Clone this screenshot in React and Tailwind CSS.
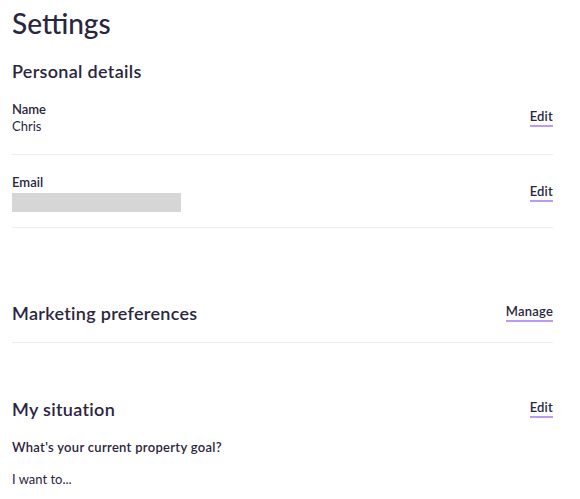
const ink = "text-[#2b2640]";

function LinkButton({ children }) {
    return (
        <button
            type="button"
            className={`${ink} text-[13px] font-semibold leading-[14px] tracking-[0.2px] border-b-2 border-[#b99af5] pb-[2px]`}
        >
            {children}
        </button>
    );
}

function DetailRow({ label, className, children }) {
    return (
        <div className={`flex items-center justify-between border-b border-[#ececec] ${className}`}>
            <div className="flex flex-col">
                <span className={`${ink} text-[13px] font-semibold leading-[16px]`}>{label}</span>
                {children}
            </div>
            <LinkButton>Edit</LinkButton>
        </div>
    );
}

const sectionTitle = `${ink} text-[18px] font-semibold leading-[24px] tracking-[0.3px]`;

export default function App() {
    return (
        <div className="w-[580px] bg-white font-['Lato',sans-serif] px-3 pt-[6px]">
            <div className="w-[541px]">
                <h1 className={`${ink} text-[28px] font-medium leading-[34px]`}>Settings</h1>
                <h2 className={`${sectionTitle} mt-[19px]`}>Personal details</h2>

                <DetailRow label="Name" className="pt-[18px] pb-[19px]">
                    <span className={`${ink} text-[13px] leading-[18px]`}>Chris</span>
                </DetailRow>
                <DetailRow label="Email" className="pt-[19px] pb-[15px]">
                    <div className="mt-[3px] w-[169px] h-[19px] bg-[#d6d6d6]" />
                </DetailRow>

                <div className="flex items-center justify-between border-b border-[#ececec] mt-[73px] pb-[17px]">
                    <h2 className={sectionTitle}>Marketing preferences</h2>
                    <LinkButton>Manage</LinkButton>
                </div>

                <div className="flex items-center justify-between mt-[54px]">
                    <h2 className={sectionTitle}>My situation</h2>
                    <LinkButton>Edit</LinkButton>
                </div>
                <p className={`${ink} text-[13px] font-semibold leading-[18px] tracking-[0.3px] mt-[17px]`}>
                    What's your current property goal?
                </p>
                <p className={`${ink} text-[13px] leading-[18px] mt-[14px]`}>I want to...</p>
            </div>
        </div>
    );
}
